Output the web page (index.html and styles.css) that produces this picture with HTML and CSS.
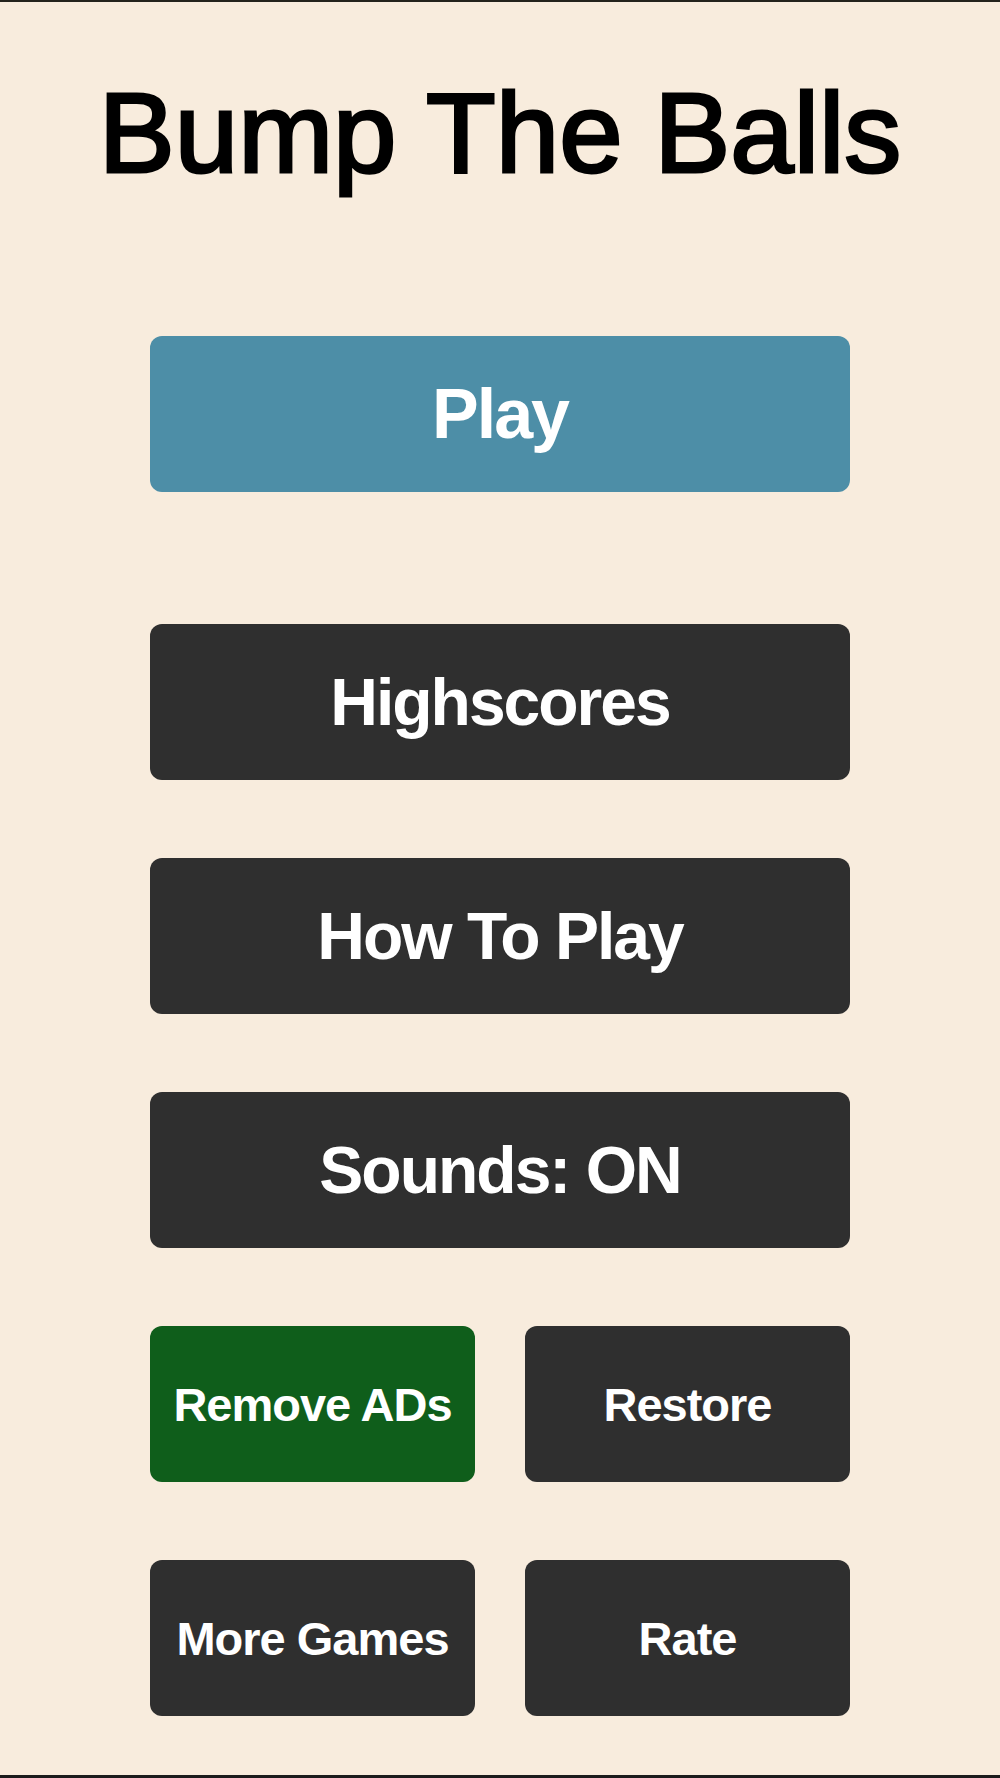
FILE: index.html
```html
<!DOCTYPE html>
<html lang="en">
<head>
  <meta charset="UTF-8">
  <meta name="viewport" content="width=device-width, initial-scale=1.0">
  <title>Bump The Balls</title>
  <link rel="stylesheet" href="styles.css">
</head>
<body>
  <div class="screen">
    <h1 class="titulo">Bump The Balls</h1>

    <div class="menu">
      <button class="btn btn-play">Play</button>

      <div class="lista">
        <button class="btn">Highscores</button>
        <button class="btn">How To Play</button>
        <button class="btn">Sounds: ON</button>

        <div class="linha">
          <button class="btn btn-small btn-verde">Remove ADs</button>
          <button class="btn btn-small">Restore</button>
        </div>

        <div class="linha">
          <button class="btn btn-small">More Games</button>
          <button class="btn btn-small">Rate</button>
        </div>
      </div>
    </div>
  </div>
</body>
</html>
```

FILE: styles.css
```css
* {
  box-sizing: border-box;
}

body {
  margin: 0;
  padding: 0;
  background-color: #f8ecdd;
  font-family: 'Liberation Sans', Arial, Helvetica, sans-serif;
}

.screen {
  height: 1778px;
  border-top: 2px solid #23231c;
  border-bottom: 3px solid #1c1c1c;
  display: flex;
  flex-direction: column;
  align-items: center;
}

.titulo {
  margin: 74px 0 0 0;
  font-size: 114px;
  line-height: 1;
  font-weight: normal;
  color: #000;
  -webkit-text-stroke: 3px #000;
  text-align: center;
}

.menu {
  width: 700px;
  margin-top: 146px;
  display: flex;
  flex-direction: column;
}

.lista {
  margin-top: 132px;
  display: flex;
  flex-direction: column;
  gap: 78px;
}

.linha {
  display: flex;
  gap: 50px;
}

.btn {
  height: 156px;
  width: 100%;
  border: none;
  border-radius: 12px;
  background-color: #2f2f2f;
  color: #fff;
  font-family: inherit;
  font-size: 66px;
  font-weight: bold;
  letter-spacing: -2px;
  padding: 0;
  display: flex;
  align-items: center;
  justify-content: center;
  cursor: pointer;
}

.btn-play {
  background-color: #4d8ea7;
  font-size: 70px;
}

.btn-small {
  flex: 1;
  font-size: 47px;
  letter-spacing: -1px;
}

.btn-verde {
  background-color: #0f5e1b;
}
```
